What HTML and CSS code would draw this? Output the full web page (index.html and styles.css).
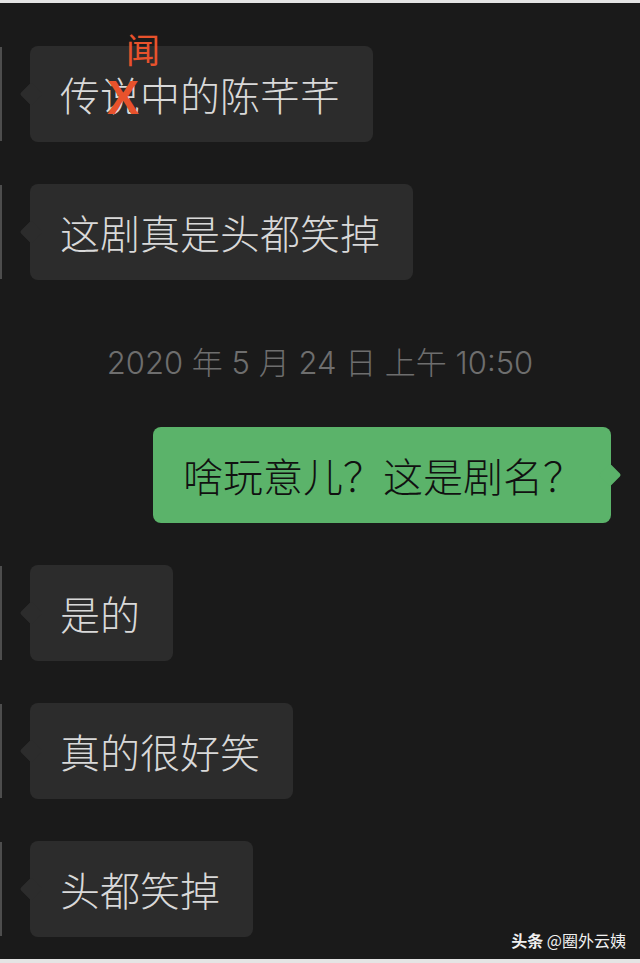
FILE: index.html
```html
<!DOCTYPE html>
<html lang="zh">
<head>
<meta charset="utf-8">
<link rel="stylesheet" href="styles.css">
</head>
<body>
<div class="screen">
  <div class="chat">
    <div class="row left">
      <div class="avatar"></div>
      <div class="bubble in">传说中的陈芊芊
        <span class="fix">闻</span>
        <span class="cross">X</span>
      </div>
    </div>
    <div class="row left">
      <div class="avatar"></div>
      <div class="bubble in">这剧真是头都笑掉</div>
    </div>
    <div class="time">2020 年 5 月 24 日 上午 10:50</div>
    <div class="row right">
      <div class="bubble out">啥玩意儿？这是剧名？</div>
    </div>
    <div class="row left">
      <div class="avatar"></div>
      <div class="bubble in">是的</div>
    </div>
    <div class="row left">
      <div class="avatar"></div>
      <div class="bubble in">真的很好笑</div>
    </div>
    <div class="row left">
      <div class="avatar"></div>
      <div class="bubble in">头都笑掉</div>
    </div>
  </div>
  <div class="mark"><b>头条</b> @圈外云姨</div>
</div>
</body>
</html>
```

FILE: styles.css
```css
* { box-sizing: border-box; }
html, body { margin: 0; padding: 0; background: #1a1a1a; }
body { font-family: "Noto Sans CJK SC", "Noto Sans", sans-serif; }
.screen {
  position: relative;
  width: 640px;
  height: 963px;
  background: #1a1a1a;
  border-top: 3px solid #e4e4e4;
  border-bottom: 4px solid #e4e4e4;
  overflow: hidden;
}
.chat {
  display: flex;
  flex-direction: column;
  padding-top: 1px;
}
.row { display: flex; margin-top: 42px; }
.row.left { justify-content: flex-start; }
.row.right { justify-content: flex-end; padding-right: 29px; margin-top: 44px; }
.avatar {
  width: 2px;
  height: 94px;
  margin-top: 1px;
  background: #4d4d4d;
  margin-right: 28px;
  flex: none;
}
.bubble {
  position: relative;
  height: 96px;
  display: flex;
  align-items: center;
  font-size: 40px;
  line-height: 40px;
  font-weight: 300;
  border-radius: 8px;
  white-space: nowrap;
}
.bubble.in {
  background: #2c2c2c;
  color: #d9d9d9;
  padding: 0 33px 0 30px;
}
.bubble.out {
  background: #5bb36a;
  color: #111;
  padding: 0 28px 0 30px;
}
.bubble.in::before {
  content: "";
  position: absolute;
  left: -7px;
  top: 40px;
  width: 16px;
  height: 16px;
  background: #2c2c2c;
  transform: rotate(45deg);
  border-radius: 2px;
}
.bubble.out::after {
  content: "";
  position: absolute;
  right: -7px;
  top: 40px;
  width: 16px;
  height: 16px;
  background: #5bb36a;
  transform: rotate(45deg);
  border-radius: 2px;
}
.fix {
  position: absolute;
  left: 96px;
  top: -14px;
  font-size: 34px;
  line-height: 34px;
  font-weight: 400;
  color: #e8522c;
}
.cross {
  position: absolute;
  left: 77px;
  top: 28px;
  font-family: "Liberation Sans", Arial, sans-serif;
  font-weight: bold;
  font-size: 48px;
  line-height: 48px;
  color: #e8522c;
}
.time {
  margin-top: 63px;
  height: 40px;
  line-height: 40px;
  text-align: center;
  font-family: "Inter", "Noto Sans CJK SC", sans-serif;
  font-size: 31px;
  font-weight: 300;
  color: #6e6e6e;
}
.mark {
  position: absolute;
  right: 14px;
  bottom: 10px;
  color: #f0f0f0;
  font-size: 16px;
  line-height: 18px;
}
.mark b { font-weight: 700; }
```
